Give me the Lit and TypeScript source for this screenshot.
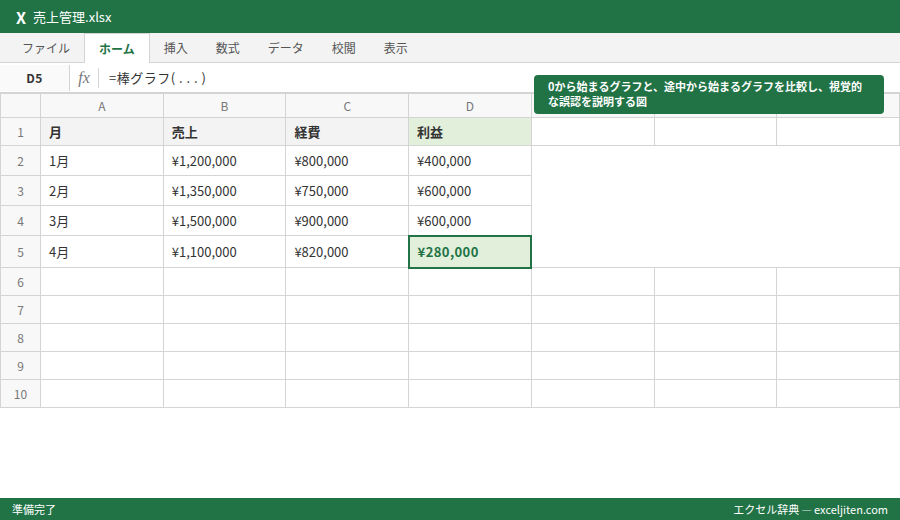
import { LitElement, css, html } from "lit";
import { customElement } from "lit/decorators.js";

const TABS = ["ファイル", "ホーム", "挿入", "数式", "データ", "校閲", "表示"];
const COLS = ["A", "B", "C", "D", "E", "F", "G"];
const HEAD = ["月", "売上", "経費", "利益"];
const ROWS = [
  ["1月", "¥1,200,000", "¥800,000", "¥400,000"],
  ["2月", "¥1,350,000", "¥750,000", "¥600,000"],
  ["3月", "¥1,500,000", "¥900,000", "¥600,000"],
  ["4月", "¥1,100,000", "¥820,000", "¥280,000"],
];

@customElement("app-root")
export class AppRoot extends LitElement {
  static styles = css`
    :host {
      display: flex;
      flex-direction: column;
      position: relative;
      width: 900px;
      height: 520px;
      overflow: hidden;
      background: #fff;
      color: #333;
      font-family: "Noto Sans CJK JP", "Noto Sans", sans-serif;
      font-size: 13px;
    }
    .title {
      height: 33px;
      flex: none;
      display: flex;
      align-items: center;
      gap: 7px;
      padding: 0 16px;
      box-sizing: border-box;
      background: #217346;
      color: #fff;
    }
    .logo {
      font-size: 16px;
      font-weight: 700;
    }
    .tabs {
      height: 30px;
      flex: none;
      display: flex;
      padding: 0 8px;
      box-sizing: border-box;
      background: #f3f3f3;
      border-bottom: 1px solid #d4d4d4;
      font-size: 12px;
      color: #555;
    }
    .tab {
      padding: 0 14px;
      line-height: 30px;
      height: 29px;
    }
    .tab.active {
      height: 30px;
      background: #fff;
      border: 1px solid #d4d4d4;
      border-width: 1px 1px 0;
      box-sizing: border-box;
      color: #217346;
      font-weight: 700;
      line-height: 29px;
    }
    .formula {
      height: 30px;
      flex: none;
      display: flex;
      align-items: center;
      box-sizing: border-box;
      border-bottom: 1px solid #d4d4d4;
    }
    .name {
      width: 70px;
      height: 26px;
      box-sizing: border-box;
      border-right: 1px solid #d4d4d4;
      background: #fafafa;
      text-align: center;
      line-height: 26px;
      font-weight: 700;
      font-size: 12px;
      letter-spacing: 0.5px;
    }
    .fx {
      width: 29px;
      height: 20px;
      box-sizing: border-box;
      border-right: 1px solid #d4d4d4;
      text-align: center;
      line-height: 20px;
      font-family: "Liberation Serif", serif;
      font-style: italic;
      font-size: 16px;
      color: #777;
    }
    .expr {
      padding-left: 10px;
      letter-spacing: 0.5px;
    }
    .sheet {
      flex: 1;
    }
    table {
      width: 900px;
      table-layout: fixed;
      border-collapse: collapse;
    }
    th,
    td {
      border: 1px solid #d4d4d4;
      padding: 0 8px;
      height: 28px;
      box-sizing: border-box;
      font-weight: 400;
      text-align: left;
    }
    thead th {
      height: 24px;
      background: #f8f8f8;
      color: #777;
      text-align: center;
      font-size: 12px;
    }
    th.corner {
      width: 40px;
    }
    tbody th {
      background: #f8f8f8;
      color: #777;
      text-align: center;
      font-size: 12px;
      padding: 0;
    }
    tr.data td,
    tr.data th {
      height: 30px;
    }
    tr.data.tall td,
    tr.data.tall th {
      height: 32px;
    }
    td.head {
      background: #f3f3f3;
      font-weight: 700;
    }
    td.green {
      background: #e2efda;
    }
    td.selected {
      background: #e2efda;
      border: 2px solid #217346;
      color: #217346;
      font-weight: 700;
      letter-spacing: 0.4px;
    }
    .note {
      position: absolute;
      left: 534px;
      top: 75px;
      width: 350px;
      height: 39px;
      box-sizing: border-box;
      padding: 4px 14px;
      border-radius: 4px;
      background: #217346;
      color: #fff;
      font-size: 11px;
      font-weight: 700;
      line-height: 15px;
    }
    .status {
      height: 22px;
      flex: none;
      display: flex;
      align-items: center;
      justify-content: space-between;
      padding: 0 12px;
      box-sizing: border-box;
      background: #217346;
      color: #fff;
      font-size: 11px;
    }
    .dash {
      opacity: 0.6;
    }
  `;

  render() {
    return html`
      <div class="title"><span class="logo">X</span><span>売上管理.xlsx</span></div>
      <div class="tabs">
        ${TABS.map((t) => html`<div class="tab ${t === "ホーム" ? "active" : ""}">${t}</div>`)}
      </div>
      <div class="formula">
        <div class="name">D5</div>
        <div class="fx">fx</div>
        <div class="expr">=棒グラフ( . . . )</div>
      </div>
      <div class="sheet">
        <table>
          <thead>
            <tr>
              <th class="corner"></th>
              ${COLS.map((c) => html`<th>${c}</th>`)}
            </tr>
          </thead>
          <tbody>
            <tr>
              <th>1</th>
              ${HEAD.map((h) => html`<td class="head ${h === "利益" ? "green" : ""}">${h}</td>`)}
              <td></td>
              <td></td>
              <td></td>
            </tr>
            ${ROWS.map(
              (r, i) => html`
                <tr class="data ${i === 3 ? "tall" : ""}">
                  <th>${i + 2}</th>
                  ${r.map((v, j) => html`<td class=${i === 3 && j === 3 ? "selected" : ""}>${v}</td>`)}
                </tr>
              `
            )}
            ${[6, 7, 8, 9, 10].map(
              (n) => html`
                <tr>
                  <th>${n}</th>
                  ${COLS.map(() => html`<td></td>`)}
                </tr>
              `
            )}
          </tbody>
        </table>
      </div>
      <div class="note">0から始まるグラフと、途中から始まるグラフを比較し、視覚的な誤認を説明する図</div>
      <div class="status">
        <span>準備完了</span>
        <span>エクセル辞典 <span class="dash">—</span> exceljiten.com</span>
      </div>
    `;
  }
}
